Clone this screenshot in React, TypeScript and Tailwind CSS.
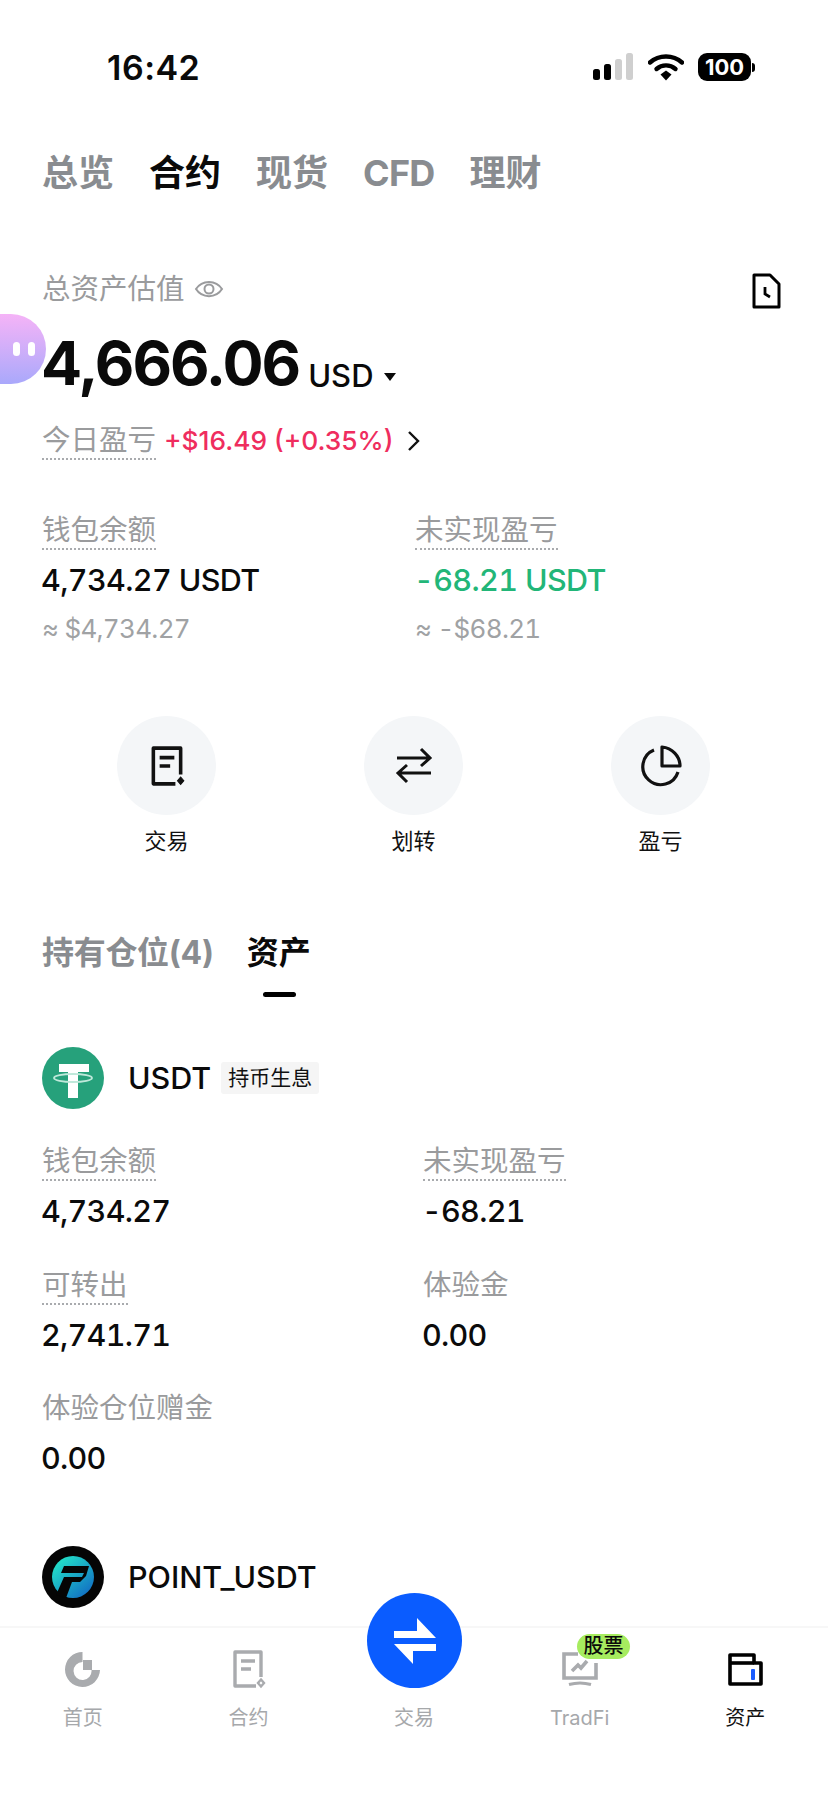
import React from "react";

const FONT = 'font-["Inter","Noto_Sans_CJK_SC",sans-serif]';

function Dotted({ children, className = "" }: { children: React.ReactNode; className?: string }) {
  return <span className={`inline-block border-b-2 border-dotted border-[#a9abae] leading-[36px] h-[38px] ${className}`}>{children}</span>;
}

function DocIcon({ color, size, dot }: { color: string; size: number; dot?: boolean }) {
  return (
    <svg width={size} height={size} viewBox="0 0 40 40" fill="none">
      <path d="M33 28V3H7v34h21" stroke={color} strokeWidth="3.4" strokeLinejoin="round" />
      <path d="M13 12h14M13 20h10" stroke={color} strokeWidth="3.4" />
      <path d="M33 30.500l3 3.500-3 3.500-3-3.500z" fill={dot ? color : "none"} stroke={color} strokeWidth={dot ? 1 : 2.4} />
    </svg>
  );
}

function Action({ label, icon }: { label: string; icon: React.ReactNode }) {
  return (
    <div className="flex flex-col items-center w-[99px]">
      <div className="w-[99px] h-[99px] rounded-full bg-[#f4f6f8] flex items-center justify-center">{icon}</div>
      <div className="mt-[11px] h-[30px] leading-[30px] text-[22px] text-[#111]">{label}</div>
    </div>
  );
}

function Stat({ label, value, dotted = true }: { label: string; value: string; dotted?: boolean }) {
  return (
    <div className="flex flex-col items-start">
      {dotted ? (
        <Dotted className="text-[28.500px] text-[#9a9b9d]">{label}</Dotted>
      ) : (
        <span className="text-[28.500px] text-[#9a9b9d] leading-[36px] h-[38px]">{label}</span>
      )}
      <div className="mt-[10px] -ml-[1px] h-[40px] leading-[40px] text-[30.500px] font-medium tabular-nums tracking-[-0.7px] text-[#0b0b0b]">{value}</div>
    </div>
  );
}

function NavItem({ label, icon, active }: { label: string; icon: React.ReactNode; active?: boolean }) {
  return (
    <div className="flex flex-col items-center relative">
      <div className="h-[44px] w-[44px] mt-[19px] flex items-center justify-center">{icon}</div>
      <div className={`mt-[13px] h-[28px] leading-[28px] text-[20px] ${active ? "text-[#111]" : "text-[#a6a8ab]"}`}>{label}</div>
    </div>
  );
}

export default function App() {
  return (
    <div className={`${FONT} w-[828px] h-[1801px] bg-white overflow-hidden flex flex-col relative`}>
      <div className="flex-1 flex flex-col px-[42px] min-h-0">
        {/* status bar */}
        <div className="h-[134px] flex items-center justify-between shrink-0">
          <span className="ml-[65px] text-[34px] font-semibold text-[#0a0a0a] tracking-[0.5px]">16:42</span>
          <div className="flex items-center mr-[31px]">
            <svg width="42" height="28" viewBox="0 0 42 28">
              <rect x="1" y="16" width="7" height="11" rx="2.500" fill="#000" />
              <rect x="12" y="11" width="7" height="16" rx="2.500" fill="#000" />
              <rect x="23" y="6" width="7" height="21" rx="2.500" fill="#cfcfcf" />
              <rect x="34" y="0" width="7" height="27" rx="2.500" fill="#cfcfcf" />
            </svg>
            <svg className="ml-[14px]" width="36" height="28" viewBox="0 0 36 28" fill="none">
              <path d="M2 9.500C11 1.500 25 1.500 34 9.500" stroke="#000" strokeWidth="4.400" strokeLinecap="round" />
              <path d="M8.500 16C14 11.200 22 11.200 27.500 16" stroke="#000" strokeWidth="4.400" strokeLinecap="round" />
              <path d="M12.500 21.500L18 17.500l5.500 4-5.500 6z" fill="#000" />
            </svg>
            <div className="ml-[14px] w-[53px] h-[28px] rounded-[9px] bg-black text-white text-[22px] font-bold flex items-center justify-center leading-none">100</div>
            <div className="w-[3px] h-[9px] bg-black rounded-r-full ml-[1px]" />
          </div>
        </div>

        {/* top tabs */}
        <div className="h-[78px] flex items-center gap-[35px] text-[36px] font-bold text-[#898c90] shrink-0">
          <span>总览</span>
          <span className="text-[#0a0a0a]">合约</span>
          <span>现货</span>
          <span className="tracking-[-0.8px]">CFD</span>
          <span>理财</span>
        </div>

        {/* total */}
        <div className="mt-[57px] h-[40px] flex items-center justify-between shrink-0">
          <div className="flex items-center text-[28.500px] text-[#9a9b9d]">
            <span>总资产估值</span>
            <svg className="ml-[9px]" width="30" height="24" viewBox="0 0 30 24" fill="none" stroke="#9a9b9d" strokeWidth="2">
              <path d="M2 12C8 2.500 22 2.500 28 12 22 21.500 8 21.500 2 12z" />
              <circle cx="15" cy="12" r="4.500" />
            </svg>
          </div>
          <svg width="32" height="36" viewBox="0 0 32 36" fill="none" className="mr-[4px] mt-[3px]" stroke="#000" strokeWidth="3">
            <path d="M4 2h16l9 9v23H4z" strokeLinejoin="round" />
            <path d="M15 14v7l5 3" strokeWidth="2.800" />
          </svg>
        </div>

        <div className="mt-[18px] -ml-[1px] h-[72px] flex items-baseline shrink-0">
          <span className="text-[61px] leading-[72px] font-bold text-[#0a0a0a] tracking-[-2px]">4,666.06</span>
          <span className="ml-[9px] text-[31px] font-medium text-[#0a0a0a] relative top-[2px]">USD</span>
          <svg className="ml-[9px] self-center mt-[28px]" width="14" height="10" viewBox="0 0 14 10"><path d="M1 1h12L7 9z" fill="#0a0a0a" /></svg>
        </div>

        <div className="mt-[23px] h-[38px] flex items-start shrink-0">
          <Dotted className="text-[28.500px] text-[#9a9b9d]">今日盈亏</Dotted>
          <span className="ml-[8px] text-[26.300px] leading-[38px] font-medium text-[#ef2d5e]">+$16.49 (+0.35%)</span>
          <svg className="ml-[14px] mt-[8px]" width="14" height="22" viewBox="0 0 14 22" fill="none"><path d="M2 2l9 9-9 9" stroke="#111" strokeWidth="2.400" /></svg>
        </div>

        {/* balances */}
        <div className="mt-[52px] grid grid-cols-[373px_1fr] shrink-0">
          <div className="flex flex-col items-start">
            <Dotted className="text-[28.500px] text-[#9a9b9d]">钱包余额</Dotted>
            <div className="mt-[10px] -ml-[1px] h-[40px] leading-[40px] text-[30.500px] font-medium tabular-nums tracking-[-0.6px] text-[#0a0a0a]">4,734.27 USDT</div>
            <div className="mt-[12px] h-[34px] leading-[34px] text-[26px] tabular-nums tracking-[-0.7px] text-[#a0a2a4]">≈ $4,734.27</div>
          </div>
          <div className="flex flex-col items-start">
            <Dotted className="text-[28.500px] text-[#9a9b9d]">未实现盈亏</Dotted>
            <div className="mt-[10px] -ml-[1px] h-[40px] leading-[40px] text-[30.500px] font-medium tabular-nums tracking-[-0.6px] text-[#22b678]">-68.21 USDT</div>
            <div className="mt-[12px] h-[34px] leading-[34px] text-[26px] tabular-nums tracking-[-0.7px] text-[#a0a2a4]">≈ -$68.21</div>
          </div>
        </div>

        {/* actions */}
        <div className="mt-[70px] flex justify-between pl-[75px] pr-[76px] shrink-0">
          <Action label="交易" icon={<DocIcon color="#111" size={42} dot />} />
          <Action
            label="划转"
            icon={
              <svg width="40" height="40" viewBox="0 0 40 40" fill="none" stroke="#111" strokeWidth="3">
                <path d="M3 12h33M27 3l9 9-9 8" />
                <path d="M37 27H4M13 19l-9 8 9 9" />
              </svg>
            }
          />
          <Action
            label="盈亏"
            icon={
              <svg width="42" height="42" viewBox="0 0 42 42" fill="none" stroke="#111" strokeWidth="3.200">
                <path d="M14 5A18 18 0 1 0 38 27" />
                <path d="M22 2v19h18C40 11 32 3 22 2z" strokeLinejoin="round" />
              </svg>
            }
          />
        </div>

        {/* section tabs */}
        <div className="mt-[75px] h-[44px] flex items-center shrink-0">
          <span className="text-[32px] font-bold text-[#898c90] tracking-[-0.3px]">持有仓位(4)</span>
          <span className="ml-[33px] text-[32px] font-bold text-[#0a0a0a]">资产</span>
        </div>
        <div className="mt-[17px] ml-[221px] w-[33px] h-[5px] rounded-full bg-black shrink-0" />

        {/* USDT */}
        <div className="mt-[50px] h-[62px] flex items-center shrink-0">
          <svg width="62" height="62" viewBox="0 0 62 62" fill="none">
            <circle cx="31" cy="31" r="31" fill="#26a17b" />
            <path d="M17 17h30v8H36v26H26V25H17z" fill="#fff" />
            <ellipse cx="31" cy="31" rx="19" ry="4" stroke="#bfe8da" strokeWidth="1.800" />
            <path d="M26 28h10v6H26z" fill="#fff" />
          </svg>
          <span className="ml-[24px] text-[30.500px] font-medium text-[#0a0a0a]">USDT</span>
          <span className="ml-[10px] h-[32px] px-[7px] rounded-[3px] bg-[#f5f5f5] text-[21px] leading-[32px] text-[#111]">持币生息</span>
        </div>

        {/* stats */}
        <div className="mt-[34px] grid grid-cols-[381px_1fr] gap-y-[35.500px] shrink-0">
          <Stat label="钱包余额" value="4,734.27" />
          <Stat label="未实现盈亏" value="-68.21" />
          <Stat label="可转出" value="2,741.71" />
          <Stat label="体验金" value="0.00" dotted={false} />
          <Stat label="体验仓位赠金" value="0.00" dotted={false} />
        </div>

        {/* POINT_USDT */}
        <div className="mt-[68px] h-[62px] flex items-center shrink-0">
          <svg width="62" height="62" viewBox="0 0 62 62">
            <defs>
              <linearGradient id="pg" x1="0.150" y1="0.100" x2="0.850" y2="0.900">
                <stop offset="0" stopColor="#22e0c8" />
                <stop offset="1" stopColor="#1272c4" />
              </linearGradient>
            </defs>
            <circle cx="31" cy="31" r="31" fill="#050505" />
            <circle cx="31" cy="31" r="21" fill="url(#pg)" />
            <path d="M22 20h25l-3 10-6 6H30l-6 16-10-3 8-18h18l2-4H19z" fill="#050505" />
          </svg>
          <span className="ml-[24px] text-[30.500px] font-medium text-[#0a0a0a]">POINT_USDT</span>
        </div>
      </div>

      {/* bottom nav */}
      <div className="h-[175px] shrink-0 border-t-2 border-[#f7f7f7] bg-white grid grid-cols-5">
        <NavItem
          label="首页"
          icon={
            <svg width="35" height="35" viewBox="0 0 35 35">
              <path d="M17.500 0A17.500 17.500 0 1 0 35 18H26.500A9 9 0 1 1 17.500 10z" fill="#a9abae" />
              <rect x="18" y="8" width="9" height="10" fill="#a9abae" />
            </svg>
          }
        />
        <NavItem label="合约" icon={<DocIcon color="#a9abae" size={40} />} />
        <NavItem label="交易" icon={<div className="w-[44px]" />} />
        <NavItem
          label="TradFi"
          icon={
            <svg width="36" height="36" viewBox="0 0 36 36" fill="none" stroke="#a9abae" strokeWidth="3.600">
              <path d="M16 3H2v24h32V12" />
              <path d="M7 33.500c7-2 15-2 22 0" strokeWidth="3" />
              <path d="M10 20l6-6 3 3 6-7" />
            </svg>
          }
        />
        <NavItem
          label="资产"
          active
          icon={
            <svg width="35" height="33" viewBox="0 0 35 33" fill="none">
              <path d="M2 31V2h24v8h7v21z" stroke="#000" strokeWidth="3.600" strokeLinejoin="round" />
              <path d="M2 10h24" stroke="#000" strokeWidth="3.600" />
              <rect x="23" y="16" width="4" height="11" rx="1" fill="#1a5cff" />
            </svg>
          }
        />
      </div>

      {/* floating bot at the edge */}
      <div className="absolute left-[-62px] top-[314px] w-[108px] h-[70px] rounded-full bg-gradient-to-b from-[#f5b3f7] to-[#a9a8fb] flex items-center justify-end pr-[11px] gap-[8px]">
        <span className="w-[7px] h-[14px] rounded-full bg-white" />
        <span className="w-[7px] h-[14px] rounded-full bg-white" />
      </div>

      {/* centre trade button */}
      <div className="absolute left-[367px] top-[1593px] w-[95px] h-[95px] rounded-full bg-[#0a5cff] flex items-center justify-center">
        <svg width="48" height="48" viewBox="0 0 48 48" fill="#fff">
          <path d="M26 1l19 20H3v-7h23z" />
          <path d="M22 47L3 27h42v7H22z" />
        </svg>
      </div>

      {/* stock tag */}
      <div className="absolute left-[577px] top-[1634px] w-[53px] h-[25px] rounded-full bg-[#a6ec5f] text-[20px] leading-[25px] font-medium text-[#0a0a0a] text-center">股票</div>
    </div>
  );
}
